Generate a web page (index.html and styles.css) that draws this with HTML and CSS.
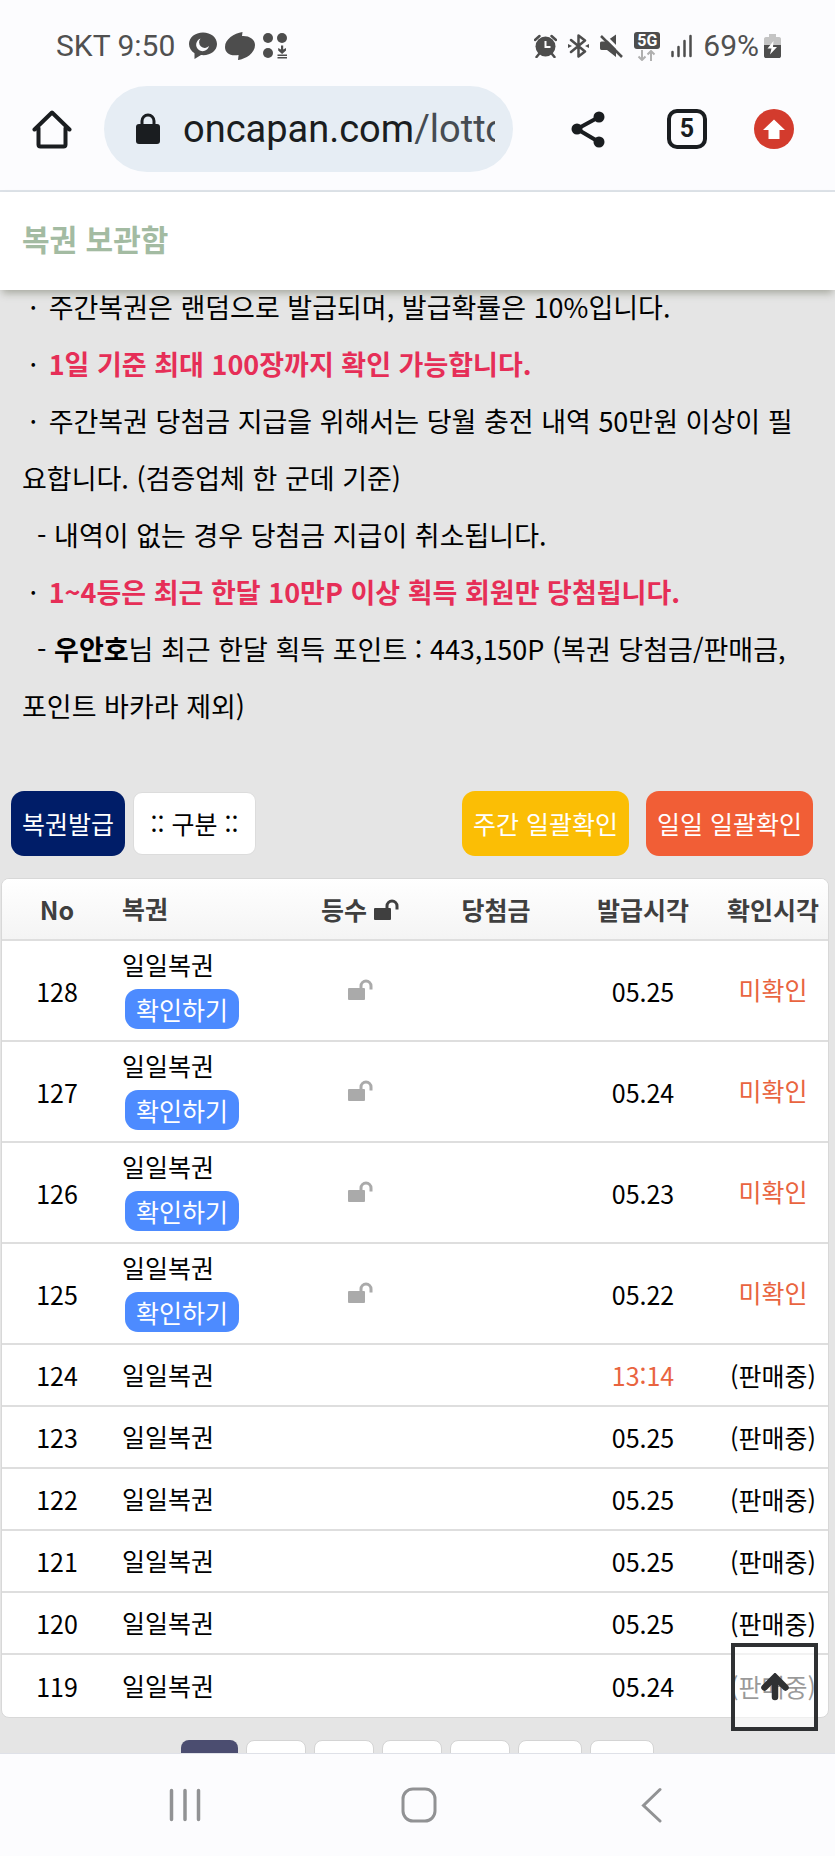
FILE: index.html
```
<!DOCTYPE html>
<html lang="ko">
<head>
    <meta charset="UTF-8">
    <meta name="viewport" content="width=device-width, initial-scale=1.0">
    <title>복권 보관함</title>
    <link rel="stylesheet" href="styles.css">
</head>
<body>
    <svg class="symbols" aria-hidden="true">
        <symbol id="unlock" viewBox="0 0 25 21">
            <rect x="0" y="9" width="17" height="12" rx="1" fill="currentColor"/>
            <path d="M13 10V7a5 5 0 0 1 10 0v3.5" fill="none" stroke="currentColor" stroke-width="3"/>
        </symbol>
    </svg>

    <!-- Barra de estado -->
    <div class="status-bar">
        <div class="status-left">
            <span>SKT 9:50</span>
            <svg width="28" height="28" viewBox="0 0 28 28">
                <path d="M14 0.5C6 0.5 0 5.500 0 12c0 3.800 2.200 7.200 5.500 9.200L5.500 27l6.500-4c9 1 16-4 16-11C28 5.500 22 0.500 14 0.500z" fill="#4d4d4d"/>
                <path d="M11.500 6.500a6.500 6.500 0 1 0 8.500 7.500a5.500 5.500 0 0 1-8.500-7.500z" fill="#fcfcfe"/>
            </svg>
            <svg width="30" height="28" viewBox="0 0 30 28">
                <path d="M17.500 0L17 4c7-.5 13 3 13 9c0 8-9 14-17 15l.6-5C5 24.500 0 21 0 15C0 7 9 1.500 17.500 0z" fill="#4d4d4d"/>
            </svg>
            <svg width="25" height="26" viewBox="0 0 25 26" fill="#4d4d4d">
                <circle cx="5" cy="5" r="5"/>
                <circle cx="19" cy="5" r="5"/>
                <circle cx="5" cy="20" r="5"/>
                <path d="M18 12.500h2.200v4l2.800-1.500v2.500l-3.900 3.500l-3.900-3.500V15l2.800 1.500zM14.500 21.500h9.500v1.500h-9.500zM14.500 24h9.500v1.500h-9.500z"/>
            </svg>
        </div>
        <div class="status-right">
            <svg width="23" height="24" viewBox="0 0 23 24">
                <circle cx="11.500" cy="12.500" r="10" fill="#4d4d4d"/>
                <path d="M1 6L5.500 2M22 6L17.500 2M5 20l-2.500 3M18 20l2.500 3" stroke="#4d4d4d" stroke-width="2.500" stroke-linecap="round"/>
                <path d="M11.500 7v6h5" fill="none" stroke="#fcfcfe" stroke-width="2"/>
            </svg>
            <svg width="21" height="24" viewBox="0 0 21 24">
                <path d="M3 6l14 11.500l-6.500 5V1.500l6.500 5L3 18" fill="none" stroke="#4d4d4d" stroke-width="2.500" stroke-linejoin="round" stroke-linecap="round"/>
                <path d="M0 10l4 2l-4 2zM21 10l-4 2l4 2z" fill="#4d4d4d"/>
            </svg>
            <svg width="23" height="24" viewBox="0 0 23 24">
                <path d="M0 9.500C0 7.500 1 7.500 3 7.500h3L16 0.500v22.500l-9-7H3c-2 0-3 0-3-2z" fill="#4d4d4d"/>
                <path d="M3 0L24 21" stroke="#fcfcfe" stroke-width="3"/>
                <path d="M1 2L22 23" stroke="#4d4d4d" stroke-width="2.500"/>
            </svg>
            <span class="network">
                <b>5G</b>
                <svg width="20" height="11" viewBox="0 0 20 11">
                    <path d="M5 0v10M1.500 6.500L5 10l3.500-3.500M14 11V1M10.500 4.500L14 1l3.500 3.500" fill="none" stroke="#b0b0b0" stroke-width="2"/>
                </svg>
            </span>
            <svg width="21" height="24" viewBox="0 0 21 24">
                <path d="M1.500 22v-4M7.500 22v-9M13.500 22V7M19.500 22V2" stroke="#4d4d4d" stroke-width="2.500" stroke-linecap="round"/>
            </svg>
            <span class="battery">69%
                <svg width="17" height="24" viewBox="0 0 17 24">
                    <path d="M5 0h7v3h3c1.500 0 2 1 2 2v7H0V5c0-1 .5-2 2-2h3z" fill="#c4c4c4"/>
                    <path d="M0 11h17v11c0 1.500-1 2-2 2H2c-1 0-2-.5-2-2z" fill="#4d4d4d"/>
                    <path d="M9.500 7l-6 7.500h4L6 20.500l7-7.500H9z" fill="#fff"/>
                </svg>
            </span>
        </div>
    </div>

    <!-- Barra del navegador -->
    <div class="browser-bar">
        <button class="icon-button" aria-label="홈">
            <svg width="40" height="40" viewBox="0 0 40 40" fill="none" stroke="#1a1d20" stroke-width="4" stroke-linejoin="round" stroke-linecap="round">
                <path d="M6.500 19v16.500q0 2 2 2h23q2 0 2-2V19M2.500 20.500L20 3.500l17.500 17"/>
            </svg>
        </button>
        <div class="address">
            <svg width="24" height="32" viewBox="0 0 24 32">
                <rect x="0" y="11" width="24" height="20" rx="3" fill="#1a1d20"/>
                <path d="M6 12V8a6 6 0 0 1 12 0v4" fill="none" stroke="#1a1d20" stroke-width="3"/>
            </svg>
            <span class="url">oncapan.com<span class="path">/lotto</span></span>
        </div>
        <button class="icon-button share" aria-label="공유">
            <svg width="40" height="40" viewBox="0 0 40 40">
                <path d="M30 8L8 20l22 13" fill="none" stroke="#1a1d20" stroke-width="4"/>
                <circle cx="30" cy="8" r="5.500" fill="#1a1d20"/>
                <circle cx="8" cy="20" r="5.500" fill="#1a1d20"/>
                <circle cx="30" cy="33" r="5.500" fill="#1a1d20"/>
            </svg>
        </button>
        <button class="tabs-button">5</button>
        <button class="icon-button" aria-label="업데이트">
            <svg width="40" height="40" viewBox="0 0 40 40">
                <circle cx="20" cy="20" r="20" fill="#d33b2d"/>
                <path d="M20 10.500L31 21h-5.500v9h-11v-9H9z" fill="#fff"/>
            </svg>
        </button>
    </div>

    <header>
        <h1>복권 보관함</h1>
    </header>

    <main>
        <div class="notice">
            <p>&nbsp;<span class="dot">·</span> 주간복권은 랜덤으로 발급되며, 발급확률은 10%입니다.</p>
            <p>&nbsp;<span class="dot">·</span> <strong class="point">1일 기준 최대 100장까지 확인 가능합니다.</strong></p>
            <p>&nbsp;<span class="dot">·</span> 주간복권 당첨금 지급을 위해서는 당월 충전 내역 50만원 이상이 필요합니다. (검증업체 한 군데 기준)</p>
            <p>&nbsp;&nbsp;- 내역이 없는 경우 당첨금 지급이 취소됩니다.</p>
            <p>&nbsp;<span class="dot">·</span> <strong class="point">1~4등은 최근 한달 10만P 이상 획득 회원만 당첨됩니다.</strong></p>
            <p>&nbsp;&nbsp;- <strong>우안호</strong>님 최근 한달 획득 포인트 : 443,150P (복권 당첨금/판매금, 포인트 바카라 제외)</p>
        </div>

        <div class="toolbar">
            <button class="btn navy">복권발급</button>
            <select class="filter" aria-label="구분">
                <option>:: 구분 ::</option>
            </select>
            <button class="btn yellow">주간 일괄확인</button>
            <button class="btn orange">일일 일괄확인</button>
        </div>

        <!-- Tabla de boletos -->
        <table>
            <colgroup>
                <col class="col-no">
                <col>
                <col class="col-rank">
                <col class="col-prize">
                <col class="col-issued">
                <col class="col-no">
            </colgroup>
            <thead>
                <tr>
                    <th>No</th>
                    <th class="ticket">복권</th>
                    <th>등수 <svg class="lock" width="25" height="21"><use href="#unlock"/></svg></th>
                    <th>당첨금</th>
                    <th>발급시각</th>
                    <th>확인시각</th>
                </tr>
            </thead>
            <tbody>
                <tr class="open">
                    <td>128</td>
                    <td class="ticket">일일복권<button class="check">확인하기</button></td>
                    <td class="muted"><svg class="lock" width="25" height="21"><use href="#unlock"/></svg></td>
                    <td></td>
                    <td>05.25</td>
                    <td class="red">미확인</td>
                </tr>
                <tr class="open">
                    <td>127</td>
                    <td class="ticket">일일복권<button class="check">확인하기</button></td>
                    <td class="muted"><svg class="lock" width="25" height="21"><use href="#unlock"/></svg></td>
                    <td></td>
                    <td>05.24</td>
                    <td class="red">미확인</td>
                </tr>
                <tr class="open">
                    <td>126</td>
                    <td class="ticket">일일복권<button class="check">확인하기</button></td>
                    <td class="muted"><svg class="lock" width="25" height="21"><use href="#unlock"/></svg></td>
                    <td></td>
                    <td>05.23</td>
                    <td class="red">미확인</td>
                </tr>
                <tr class="open">
                    <td>125</td>
                    <td class="ticket">일일복권<button class="check">확인하기</button></td>
                    <td class="muted"><svg class="lock" width="25" height="21"><use href="#unlock"/></svg></td>
                    <td></td>
                    <td>05.22</td>
                    <td class="red">미확인</td>
                </tr>
                <tr>
                    <td>124</td>
                    <td class="ticket">일일복권</td>
                    <td></td>
                    <td></td>
                    <td class="red">13:14</td>
                    <td>(판매중)</td>
                </tr>
                <tr>
                    <td>123</td>
                    <td class="ticket">일일복권</td>
                    <td></td>
                    <td></td>
                    <td>05.25</td>
                    <td>(판매중)</td>
                </tr>
                <tr>
                    <td>122</td>
                    <td class="ticket">일일복권</td>
                    <td></td>
                    <td></td>
                    <td>05.25</td>
                    <td>(판매중)</td>
                </tr>
                <tr>
                    <td>121</td>
                    <td class="ticket">일일복권</td>
                    <td></td>
                    <td></td>
                    <td>05.25</td>
                    <td>(판매중)</td>
                </tr>
                <tr>
                    <td>120</td>
                    <td class="ticket">일일복권</td>
                    <td></td>
                    <td></td>
                    <td>05.25</td>
                    <td>(판매중)</td>
                </tr>
                <tr>
                    <td>119</td>
                    <td class="ticket">일일복권</td>
                    <td></td>
                    <td></td>
                    <td>05.24</td>
                    <td>(판매중)</td>
                </tr>
            </tbody>
        </table>

        <nav class="pages">
            <a href="#" class="active"></a>
            <a href="#"></a>
            <a href="#"></a>
            <a href="#"></a>
            <a href="#"></a>
            <a href="#" class="wide"></a>
            <a href="#" class="wide"></a>
        </nav>

        <button class="to-top" aria-label="맨 위로">
            <svg width="28" height="28" viewBox="0 0 28 28" fill="none" stroke="#2f3133" stroke-width="6.500" stroke-linecap="round">
                <path d="M14 24V6M3.500 14.500L14 4l10.500 10.500"/>
            </svg>
        </button>
    </main>

    <!-- Botones del sistema -->
    <nav class="system-nav">
        <button class="icon-button" aria-label="최근 앱">
            <svg width="36" height="36" viewBox="0 0 36 36" stroke="#919294" stroke-width="3.500" stroke-linecap="round">
                <path d="M4.500 3.500v29M18 3.500v29M31.500 3.500v29"/>
            </svg>
        </button>
        <button class="icon-button" aria-label="홈 화면">
            <svg width="36" height="36" viewBox="0 0 36 36">
                <rect x="2" y="2" width="32" height="32" rx="10" fill="none" stroke="#919294" stroke-width="3"/>
            </svg>
        </button>
        <button class="icon-button" aria-label="뒤로">
            <svg width="36" height="36" viewBox="0 0 36 36" fill="none" stroke="#919294" stroke-width="3" stroke-linecap="round">
                <path d="M26 2.500L9.500 18.500L26 34"/>
            </svg>
        </button>
    </nav>
</body>
</html>
```
FILE: styles.css
```
* { box-sizing: border-box; }
body { margin: 0; height: 100vh; display: flex; flex-direction: column; background: #fcfcfe; color: #000; font-family: "Noto Sans CJK KR", sans-serif; font-size: 25px; }
button { padding: 0; border: none; background: none; font: inherit; cursor: pointer; }
svg { display: block; flex: none; }
.symbols { display: none; }
.icon-button { width: 40px; height: 40px; display: flex; align-items: center; justify-content: center; }

.status-bar { display: flex; justify-content: space-between; padding: 28px 54px 0 56px; font-family: Roboto, sans-serif; font-size: 30px; line-height: 36px; color: #505050; }
.status-left, .status-right, .battery { display: flex; align-items: center; }
.status-left { gap: 8px; }
.status-left span { margin-right: 6px; }
.status-right { gap: 11px; }
.battery { gap: 5px; }
.network { display: flex; flex-direction: column; align-items: center; gap: 1px; }
.network b { width: 26px; border-radius: 3px; background: #4d4d4d; color: #fff; font-size: 16px; line-height: 17px; text-align: center; }

.browser-bar { display: flex; align-items: center; padding: 22px 41px 18px 32px; border-bottom: 2px solid #dde2e8; }
.address { flex: 1; min-width: 0; height: 86px; margin: 0 56px 0 32px; padding: 0 18px 0 32px; border-radius: 43px; background: #e6edf4; display: flex; align-items: center; gap: 23px; }
.url { flex: 1; overflow: hidden; white-space: nowrap; font-family: Roboto, sans-serif; font-size: 38px; line-height: 48px; color: #1a1d20; }
.path { color: #454b52; }
.share { margin-right: 58px; }
.tabs-button { width: 40px; height: 40px; margin-right: 47px; border: 4px solid #1a1d20; border-radius: 10px; color: #1a1d20; font-family: Roboto, sans-serif; font-size: 25px; font-weight: 700; line-height: 32px; }

header { position: relative; z-index: 1; padding: 24px 22px 30px; background: #fff; box-shadow: 0 5px 8px -2px rgba(70, 75, 50, 0.4); }
header h1 { margin: 0; font-size: 30px; line-height: 44px; color: #a3bba2; }

main { position: relative; flex: 1; min-height: 0; overflow: hidden; background: #e5e5e5; }
.notice { margin-top: -12px; padding: 0 36px 0 22px; font-size: 27px; line-height: 57px; }
.notice p { margin: 0; }
.dot { margin-right: 4px; }
.point { color: #e62e57; }

.toolbar { display: flex; align-items: center; padding: 57px 22px 22px 11px; }
.btn { height: 65px; padding: 0 11px 2px; border-radius: 13px; color: #fff; white-space: nowrap; }
.navy { background: #001d68; }
.yellow { margin-left: auto; background: #fbbe05; }
.orange { margin-left: 17px; background: #f15e36; }
.filter { width: 123px; height: 63px; margin-left: 8px; padding: 0 0 2px; appearance: none; border: 1px solid #dcdcdc; border-radius: 9px; background: #fff; color: #000; font: inherit; text-align: center; text-align-last: center; }

table { width: calc(100% - 7px); margin-left: 1px; table-layout: fixed; border-collapse: separate; border-spacing: 0; border: 1px solid #d8d8d8; border-radius: 8px; overflow: hidden; background: #fff; }
.col-no { width: 110px; }
.col-rank { width: 128px; }
.col-prize { width: 144px; }
.col-issued { width: 150px; }
th, td { height: 62px; padding: 0; text-align: center; line-height: 36px; white-space: nowrap; border-bottom: 2px solid #dedede; }
th { background: linear-gradient(#fff, #f4f4f4); color: #3f3f3f; }
tbody tr:last-child td { border-bottom: none; }
.open td { height: 101px; }
.ticket { padding: 0 0 3px 10px; text-align: left; }
.open .ticket { padding-bottom: 7px; }
.open .red, .open .muted { padding-bottom: 4px; }
.lock { display: inline-block; }
.muted { color: #aaa; }
.red { color: #e9643f; }
.check { display: block; height: 40px; margin: 7px 0 0 3px; padding: 0 11px; border-radius: 13px; background: #4d8bff; color: #fff; line-height: 36px; }

.pages { display: flex; justify-content: center; gap: 8px; margin-top: 22px; }
.pages a { width: 60px; height: 60px; border: 1px solid #d4d4d4; border-radius: 8px; background: #fff; }
.pages .active { width: 57px; border: none; background: #4b4d70; }
.pages .wide { width: 64px; }

.to-top { position: absolute; right: 17px; bottom: 22px; width: 87px; height: 88px; display: flex; align-items: center; justify-content: center; border: 4px solid #2f3133; background: rgba(255, 255, 255, 0.6); }

.system-nav { display: flex; justify-content: space-between; padding: 31px 163px 31px 165px; border-top: 1px solid #dfe1e8; }
```
